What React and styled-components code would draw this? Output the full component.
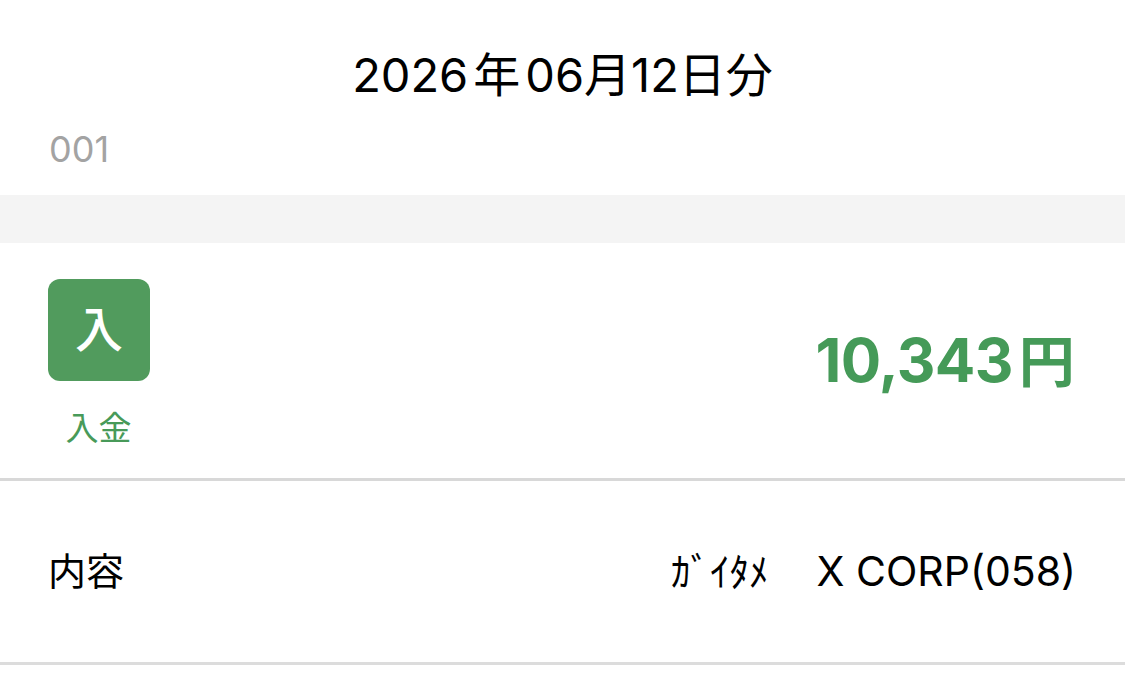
import React from 'react';
import styled, { createGlobalStyle } from 'styled-components';

const GlobalStyle = createGlobalStyle`
  html, body {
    margin: 0;
    background-color: #fff;
    font-family: Inter, 'Noto Sans CJK JP', sans-serif;
    color: #000;
  }
`;

const Page = styled.div`
  width: 1125px;
  height: 680px;
  overflow: hidden;
`;

const Header = styled.header`
  height: 195px;
  padding: 48px 49px 0;
  box-sizing: border-box;
`;

const DateTitle = styled.h1`
  margin: 0;
  height: 54px;
  line-height: 54px;
  font-size: 47px;
  font-weight: 400;
  text-align: center;
`;

const Gap = styled.span`
  display: inline-block;
  width: ${props => props.size}px;
`;

const Code = styled.div`
  margin-top: 20px;
  font-size: 36px;
  line-height: 54px;
  color: #a3a3a3;
`;

const Band = styled.div`
  height: 48px;
  background-color: #f4f4f4;
`;

const AmountRow = styled.section`
  height: 238px;
  box-sizing: border-box;
  padding: 36px 51px 0 48px;
  display: flex;
  justify-content: space-between;
  border-bottom: 3px solid #d8d8d8;
`;

const Kind = styled.div`
  width: 102px;
  display: flex;
  flex-direction: column;
  align-items: center;
`;

const KindBadge = styled.div`
  width: 102px;
  height: 102px;
  border-radius: 12px;
  background-color: #519b5d;
  color: #fff;
  font-size: 48px;
  font-weight: 500;
  line-height: 102px;
  text-align: center;
`;

const KindLabel = styled.div`
  margin-top: 24px;
  margin-left: -1px;
  font-size: 33px;
  line-height: 46px;
  color: #489a59;
`;

const Amount = styled.div`
  margin-top: 45px;
  font-size: 60px;
  line-height: 72px;
  font-weight: 700;
  letter-spacing: -0.7px;
  color: #459a58;
`;

const Unit = styled.span`
  font-size: 56px;
  margin-left: 6px;
`;

const DetailRow = styled.section`
  height: 184px;
  box-sizing: border-box;
  padding: 0 49px 6px 48px;
  display: flex;
  justify-content: space-between;
  align-items: center;
  border-bottom: 3px solid #dcdcdc;
`;

const DetailLabel = styled.div`
  font-size: 38px;
`;

const DetailValue = styled.div`
  font-size: 41px;
  white-space: pre;
`;

const Kana = styled.span`
  font-size: 39px;
  margin-right: 9px;
`;

const App = () => (
  <Page>
    <GlobalStyle />
    <Header>
      <DateTitle>2026<Gap size={5} />年<Gap size={5} />06月12日分</DateTitle>
      <Code>001</Code>
    </Header>
    <Band />
    <AmountRow>
      <Kind>
        <KindBadge>入</KindBadge>
        <KindLabel>入金</KindLabel>
      </Kind>
      <Amount>10,343<Unit>円</Unit></Amount>
    </AmountRow>
    <DetailRow>
      <DetailLabel>内容</DetailLabel>
      <DetailValue><Kana>ｶﾞｲﾀﾒ　</Kana>X CORP(058)</DetailValue>
    </DetailRow>
  </Page>
);

export default App;
